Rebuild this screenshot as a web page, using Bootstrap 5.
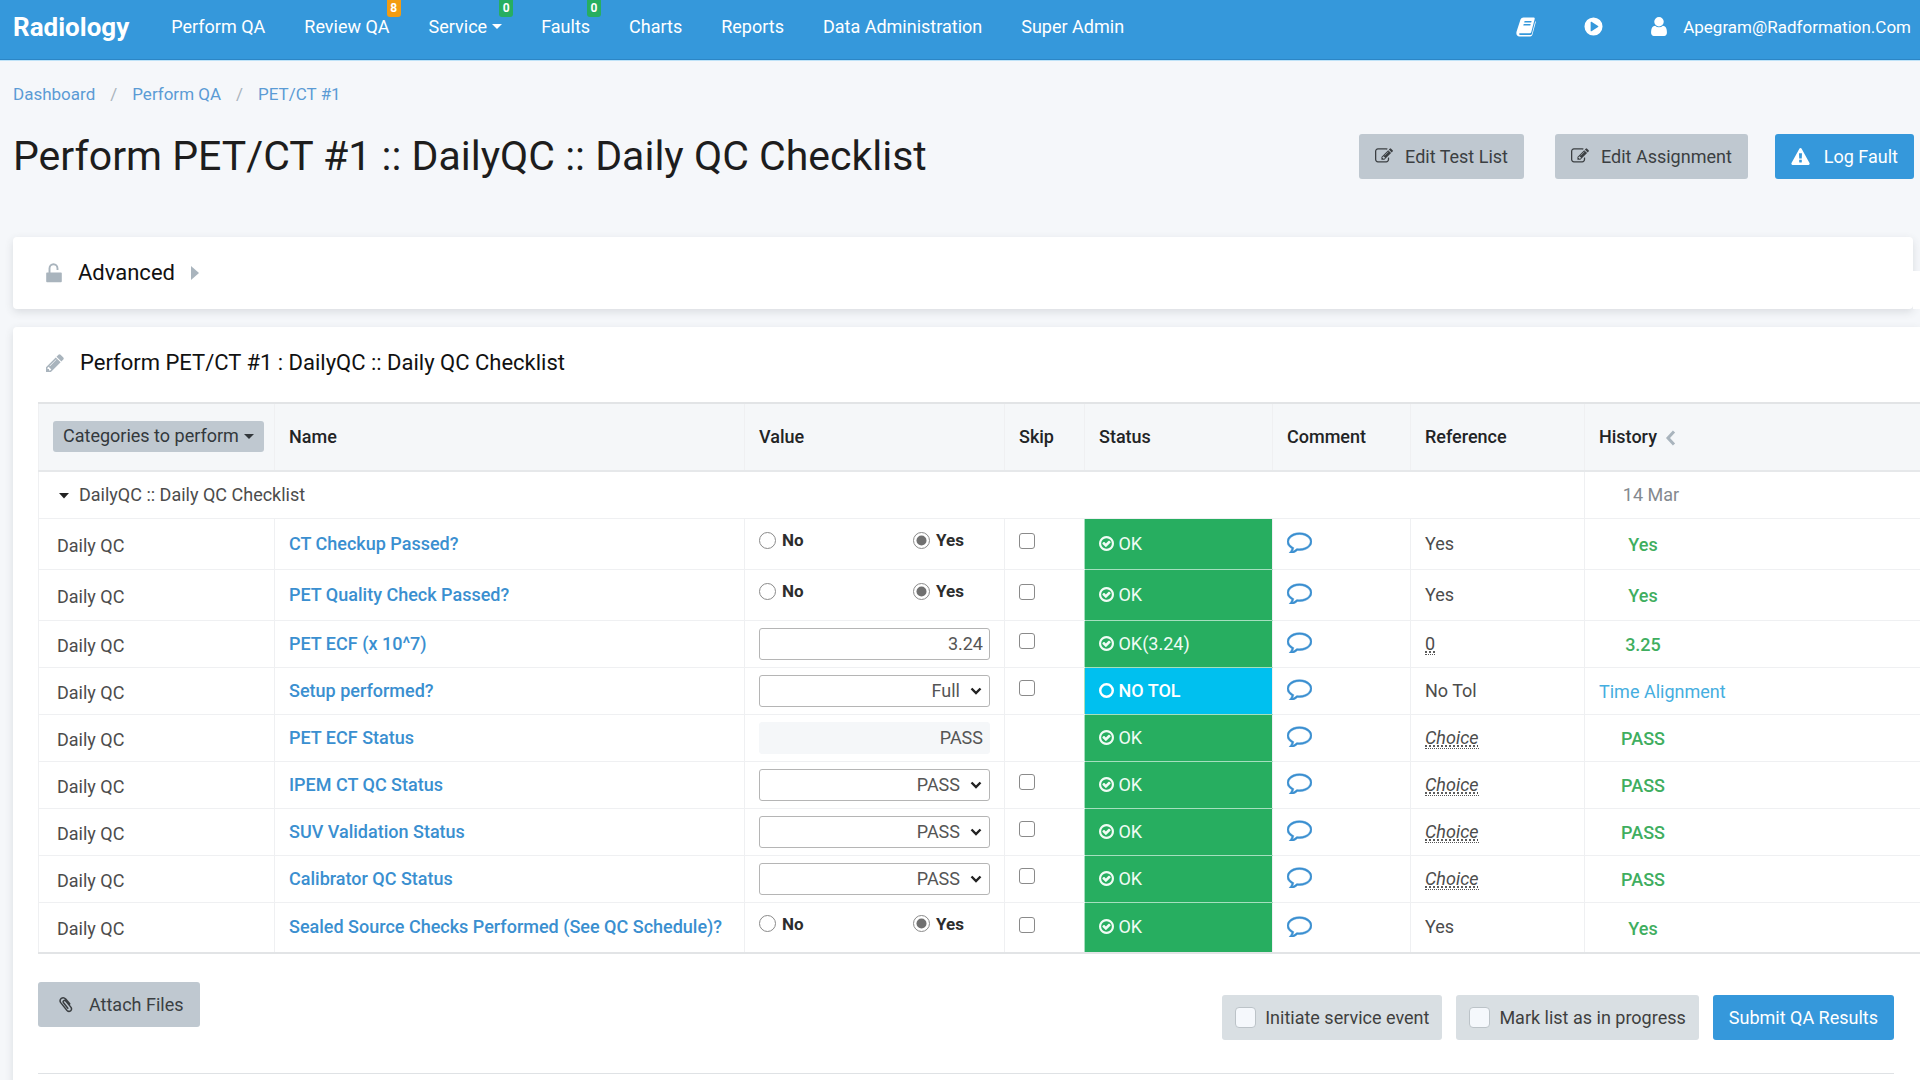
<!DOCTYPE html>
<html lang="en">
<head>
<meta charset="utf-8">
<meta name="viewport" content="width=device-width, initial-scale=1">
<title>Perform PET/CT #1 :: DailyQC :: Daily QC Checklist</title>
<link href="https://cdn.jsdelivr.net/npm/bootstrap@5.3.0/dist/css/bootstrap.min.css" rel="stylesheet">
<style>
  :root { --qa-blue: #3598db; --qa-green: #27ae60; --qa-grey: #bfc8d0; --qa-line: #eff0f2; }
  body { font-family: Roboto, "Liberation Sans", sans-serif; font-size: 18px; line-height: 24px; color: #4c4c4c; background: #f5f7fa; overflow-x: hidden; }
  a { text-decoration: none; }
  svg { fill: currentColor; flex: none; }
  .topbar { background: var(--qa-blue); border-bottom: 1px solid #2c86c6; box-shadow: 0 1px 0 #bfe3f8; height: 60px; padding: 0 9px 6px 13px; color: #fff; }
  .topbar a { color: #fff; }
  .brand { font-size: 26px; font-weight: 700; margin-right: 42px; }
  .main-nav { gap: 39px; }
  .main-nav .nav-link { padding: 0; height: 53px; display: flex; align-items: center; }
  .user-name { font-size: 17px; }
  .dropdown-toggle::after { border-width: 5px 5px 0; border-top-color: currentColor; margin-left: 5px; vertical-align: 3px; }
  .count { position: absolute; top: 0; right: -11px; min-width: 14px; height: 17px; padding: 0 3px; border-radius: 0 0 3px 3px; font-size: 12px; line-height: 16px; font-weight: 700; text-align: center; color: #fff; background: var(--qa-green); }
  .count-warn { background: #f39c12; }
  .page-head { padding: 22px 6px 0 13px; }
  .crumbs { --bs-breadcrumb-item-padding-x: 15px; --bs-breadcrumb-divider-color: #aab4bd; margin-bottom: 24px; font-size: 17px; }
  .crumbs a { color: #5b9bd5; }
  .page-title { font-size: 41px; line-height: 52px; font-weight: 400; color: #1d1d1d; margin: 0; }
  .tool { height: 45px; padding: 0 16px; border: 0; border-radius: 3px; font-size: 18px; display: inline-flex; align-items: center; gap: 12px; color: #3b3f42; background: var(--qa-grey); }
  .tool:hover { background: #b2bcc5; }
  .tool-blue { color: #fff; background: var(--qa-blue); gap: 14px; }
  .tool-blue:hover { color: #fff; background: #2c86c6; }
  .head-tools { gap: 27px; }
  .panel { background: #fff; border-radius: 4px; box-shadow: 0 3px 8px rgba(60, 64, 70, .14); }
  .panel-adv { position: relative; margin: 55px 7px 18px 13px; height: 72px; padding-left: 33px; }
  .panel-adv::after { content: ""; position: absolute; top: 34px; bottom: 0; right: -7px; width: 7px; background: #fff; }
  .panel-main { margin-left: 13px; padding: 21px 0 60px 25px; border-radius: 4px 0 0 0; }
  .panel-title { font-size: 22px; line-height: 30px; font-weight: 400; color: #111; margin: 0; }
  .panel svg.pale { color: #a9b4bd; }
  .qa-table { table-layout: fixed; width: 100%; margin: 24px 0 0; border-collapse: collapse; border: 1px solid #e2e4e6; border-width: 2px 0 2px 1px; }
  .qa-table th, .qa-table td { padding: 0 14px; border: 1px solid var(--qa-line); border-right: 0; vertical-align: middle; }
  .qa-table thead th { height: 68px; background: #f5f7f9; font-weight: 500; color: #222426; border-bottom: 2px solid #e6e8ea; }
  .qa-table thead th:first-child { padding-bottom: 2px; }
  .qa-table tbody tr { height: 47px; }
  .qa-table tbody tr.tall { height: 51px; }
  .qa-table td.cat { padding: 4px 18px 0; }
  .qa-table td.stat { color: #f0fbf4; background: var(--qa-green); border-color: #a5dfbe; }
  .qa-table td.notol { color: #fff; background: #00c0ef; font-weight: 500; }
  .group-caret { margin: 0 10px 0 6px; color: #222; }
  .stat svg { vertical-align: -1px; }
  .name a { color: #3a8fd0; font-weight: 500; }
  .cat-btn { height: 31px; padding: 0 10px; border: 0; border-radius: 3px; font-size: 18px; line-height: 24px; color: #33383c; background: var(--qa-grey); white-space: nowrap; }
  .value .form-control, .value .form-select { display: block; height: 32px; min-height: 32px; padding: 0 6px; border: 1px solid #b5b5b5; border-radius: 3px; font-size: 18px; line-height: 24px; color: #555; text-align: right; }
  .value .form-select { text-align-last: right; padding-right: 29px; background-position: right 7px center; background-size: 12px 12px; --bs-form-select-bg-img: url("data:image/svg+xml,%3Csvg xmlns='http://www.w3.org/2000/svg' viewBox='0 0 12 12'%3E%3Cpath fill='none' stroke='%23222' stroke-width='2.4' d='M1.5 3.5 6 8l4.5-4.5'/%3E%3C/svg%3E"); }
  .value .calc { border-color: #f5f7f9; background: #f5f7f9; }
  .choices { padding-bottom: 7px; }
  .choices label { color: #2d2d2d; font-size: 17px; font-weight: 700; display: flex; align-items: center; gap: 6px; }
  .choices label:first-child { width: 66.6667%; }
  .form-check-input { float: none; margin: 0; flex: none; }
  .choices .form-check-input { width: 17px; height: 17px; border: 1px solid #8a8a8a; background-color: #fff; }
  .choices .form-check-input:checked { border-color: #8a8a8a; background-size: 17px 17px; background-image: url("data:image/svg+xml,%3Csvg xmlns='http://www.w3.org/2000/svg' viewBox='0 0 17 17'%3E%3Ccircle cx='8.5' cy='8.5' r='5' fill='%23707070'/%3E%3C/svg%3E"); }
  .skip .form-check-input { display: block; width: 16px; height: 16px; border: 1px solid #8a8a8a; border-radius: 3px; margin-bottom: 5px; }
  .note-btn { display: block; padding: 0; border: 0; background: none; color: #3a8fd0; margin-bottom: 2px; }
  .note-btn svg { display: block; }
  .refv { text-decoration: underline dotted; text-underline-offset: 2px; border-bottom: 1px dotted #555; line-height: 20px; display: inline-block; cursor: help; }
  .hist span { display: inline-block; min-width: 88px; text-align: center; color: #3fae5f; font-weight: 500; padding-top: 3px; }
  .hist .info { color: #45aee0; font-weight: 400; }
  .hist .day { color: #84898e; min-width: 104px; font-weight: 400; padding: 0; }
  .opt { height: 45px; padding: 0 13px; border-radius: 3px; background: #d9dfe3; color: #3f3f3f; gap: 9px; }
  .opt .form-check-input { width: 21px; height: 21px; border: 1px solid #bcc3c8; border-radius: 4px; background-color: #f5f8fc; }
  .foot { padding-right: 26px; margin-top: 28px; }
  .foot-opts { gap: 14px; padding-top: 13px; }
  .rule { margin: 33px 26px 0 0; border-color: #dfe2e5; opacity: 1; }
</style>
<script src="https://cdn.jsdelivr.net/npm/bootstrap@5.3.0/dist/js/bootstrap.bundle.min.js"></script>
</head>
<body>
<svg class="d-none" aria-hidden="true">
  <symbol id="i-note" viewBox="0 236 1792 1448"><path stroke="currentColor" stroke-width="36" d="M896 384q-204 0-381.500 69.500t-282 187.500-104.500 255q0 112 71.500 213.500t201.500 175.500l87 50-27 96q-24 91-70 172 152-63 275-171l43-38 57 6q69 8 130 8 204 0 381.500-69.500t282-187.500 104.500-255-104.500-255-282-187.500-381.500-69.500zm896 512q0 174-120 321.500t-326 233-450 85.500q-70 0-145-8-198 175-460 242-49 14-114 22h-5q-15 0-27-10.500t-16-27.500v-1q-3-4-.5-12t2-10 4.500-9.500l6-9 7-8.500 8-9q7-8 31-34.500t34.500-38 31-39.500 32.500-51 27-59 26-76q-157-89-247.500-220t-90.500-281q0-174 120-321.500t326-233 450-85.500 450 85.500 326 233 120 321.500z"/></symbol>
  <symbol id="i-ok" viewBox="128 128 1536 1536"><path d="M1299 813l-422 422q-19 19-45 19t-45-19l-294-294q-19-19-19-45t19-45l102-102q19-19 45-19t45 19l147 147 275-275q19-19 45-19t45 19l102 102q19 19 19 45t-19 45zm141 83q0-148-73-273t-198-198-273-73-273 73-198 198-73 273 73 273 198 198 273 73 273-73 198-198 73-273zm224 0q0 209-103 385.500t-279.500 279.500-385.500 103-385.500-103-279.500-279.500-103-385.500 103-385.500 279.500-279.500 385.500-103 385.500 103 279.500 279.500 103 385.500z"/></symbol>
  <symbol id="i-ring" viewBox="0 0 16 16"><circle cx="8" cy="8" r="6.700" fill="none" stroke="currentColor" stroke-width="2.600"/></symbol>
  <symbol id="i-edit" viewBox="0 128 1792 1536"><path d="M888 1184l116-116-152-152-116 116v56h96v96h56zm440-720q-16-16-33 1l-350 350q-17 17-1 33t33-1l350-350q17-17 1-33zm80 594v190q0 119-84.500 203.500t-203.500 84.500h-832q-119 0-203.500-84.500t-84.500-203.500v-832q0-119 84.500-203.500t203.500-84.500h832q63 0 117 25 15 7 18 23 3 17-9 29l-49 49q-14 14-32 8-23-6-45-6h-832q-66 0-113 47t-47 113v832q0 66 47 113t113 47h832q66 0 113-47t47-113v-126q0-13 9-22l64-64q15-15 35-7t20 29zm-96-738l288 288-672 672h-288v-288zm444 132l-92 92-288-288 92-92q28-28 68-28t68 28l152 152q28 28 28 68t-28 68z"/></symbol>
  <symbol id="i-warn" viewBox="0 0 1792 1664"><path d="M1024 1375v-190q0-14-9.500-23.500t-22.500-9.500h-192q-13 0-22.500 9.500t-9.500 23.500v190q0 14 9.500 23.500t22.500 9.500h192q13 0 22.500-9.500t9.500-23.500zm-2-374l18-459q0-12-10-19-13-11-24-11h-220q-11 0-24 11-10 7-10 21l17 457q0 10 10 16.500t24 6.500h185q14 0 23.500-6.500t10.500-16.500zm-14-934l768 1408q35 63-2 126-17 29-46.500 46t-63.500 17h-1536q-34 0-63.500-17t-46.500-46q-37-63-2-126l768-1408q17-31 47-49t65-18 65 18 47 49z"/></symbol>
  <symbol id="i-user" viewBox="256 128 1280 1536"><path d="M1536 1399q0 109-62.500 187t-150.500 78h-854q-88 0-150.500-78t-62.500-187q0-85 8.500-160.500t31.500-152 58.500-131 94-89 134.500-34.500q131 128 313 128t313-128q76 0 134.500 34.500t94 89 58.500 131 31.500 152 8.500 160.500zm-256-887q0 159-112.500 271.500t-271.500 112.500-271.500-112.500-112.500-271.500 112.500-271.500 271.500-112.500 271.500 112.500 112.500 271.500z"/></symbol>
  <symbol id="i-pencil" viewBox="128 128 1536 1536"><path d="M491 1536l91-91-235-235-91 91v107h128v128h107zm523-928q0-22-22-22-10 0-17 7l-542 542q-7 7-7 17 0 22 22 22 10 0 17-7l542-542q7-7 7-17zm-54-192l416 416-832 832h-416v-416zm683 96q0 53-37 90l-166 166-416-416 166-165q36-38 90-38 53 0 91 38l235 234q37 39 37 91z"/></symbol>
  <symbol id="i-book" viewBox="0 0 20 20"><path fill-rule="evenodd" d="M7.500.5h10.200q1.300.2 1 1.500l-3.400 13q-.4 1.200-1.600 1.200H3.900q-1 .2-.8 1 .2.700 1.300.7h10.200q1 0 1.300-1L19.300 4q.6.5.4 1.500l-3.300 12.300q-.5 1.700-2.200 1.700H3.400Q.6 19.200.4 16.500.3 15.500.6 14.500L4.500 2.500Q5.300.5 7.500.5zM8.600 4l-.4 1.400h7L15.600 4zm-.9 3-.4 1.400h7l.4-1.400z"/></symbol>
  <symbol id="i-play" viewBox="0 0 20 20"><path fill-rule="evenodd" d="M10 .5a9.500 9.500 0 1 1 0 19 9.500 9.500 0 0 1 0-19zM7 5.600v8.800q0 1 .9.500l6.900-4.300q.8-.6 0-1.200L7.900 5.100Q7 4.600 7 5.600z"/></symbol>
  <symbol id="i-unlock" viewBox="0 0 16 20"><path d="M1 9.500h14q.8 0 .8.800v8q0 .9-.8.900H1q-.8 0-.8-.9v-8q0-.8.800-.8z"/><path d="M3.500 10V5.500a4 4.300 0 0 1 8 0V7" fill="none" stroke="currentColor" stroke-width="1.900"/></symbol>
  <symbol id="i-clip" viewBox="0 0 16 18"><path d="M12.500 8.300 8.200 3.100Q6 .8 3.500 2.400 1.200 4.400 2.900 7l6.700 8.300q1.800 1.800 3.800.5 1.800-1.600.5-3.800L8.300 5.200Q7.200 4.100 6 5q-1 1-.1 2.200l4.600 5.700" fill="none" stroke="currentColor" stroke-width="1.600" stroke-linecap="round"/></symbol>
</svg>

<header class="topbar d-flex align-items-center">
  <a class="brand" href="#">Radiology</a>
  <nav aria-label="Main">
    <ul class="nav main-nav">
      <li class="nav-item"><a class="nav-link" href="#">Perform QA</a></li>
      <li class="nav-item position-relative"><a class="nav-link" href="#">Review QA</a><span class="count count-warn">8</span></li>
      <li class="nav-item position-relative"><a class="nav-link dropdown-toggle" href="#">Service</a><span class="count">0</span></li>
      <li class="nav-item position-relative"><a class="nav-link" href="#">Faults</a><span class="count">0</span></li>
      <li class="nav-item"><a class="nav-link" href="#">Charts</a></li>
      <li class="nav-item"><a class="nav-link" href="#">Reports</a></li>
      <li class="nav-item"><a class="nav-link" href="#">Data Administration</a></li>
      <li class="nav-item"><a class="nav-link" href="#">Super Admin</a></li>
    </ul>
  </nav>
  <div class="d-flex align-items-center ms-auto">
    <a class="d-flex me-5" href="#" aria-label="Manual"><svg width="20" height="20"><use href="#i-book"/></svg></a>
    <a class="d-flex me-5" href="#" aria-label="Tutorials"><svg width="19" height="19"><use href="#i-play"/></svg></a>
    <a class="d-flex align-items-center" href="#"><svg class="me-3" width="16" height="19"><use href="#i-user"/></svg><span class="user-name">Apegram@Radformation.Com</span></a>
  </div>
</header>

<main>
  <div class="page-head">
    <nav aria-label="breadcrumb">
      <ol class="breadcrumb crumbs">
        <li class="breadcrumb-item"><a href="#">Dashboard</a></li>
        <li class="breadcrumb-item"><a href="#">Perform QA</a></li>
        <li class="breadcrumb-item"><a href="#">PET/CT #1</a></li>
      </ol>
    </nav>
    <div class="d-flex align-items-center justify-content-between">
      <h1 class="page-title">Perform PET/CT #1 :: DailyQC :: Daily QC Checklist</h1>
      <div class="d-flex head-tools">
        <button type="button" class="btn tool me-1"><svg width="18" height="16"><use href="#i-edit"/></svg>Edit Test List</button>
        <button type="button" class="btn tool"><svg width="18" height="16"><use href="#i-edit"/></svg>Edit Assignment</button>
        <button type="button" class="btn tool tool-blue"><svg width="19" height="17"><use href="#i-warn"/></svg>Log Fault</button>
      </div>
    </div>
  </div>

  <section class="panel panel-adv d-flex align-items-center">
    <svg class="pale" width="16" height="20"><use href="#i-unlock"/></svg>
    <h2 class="panel-title ms-3">Advanced</h2>
    <svg class="pale ms-3" width="8" height="14" viewBox="0 0 8 14"><path d="M0 0 8 7 0 14z"/></svg>
  </section>

  <section class="panel panel-main">
    <div class="d-flex align-items-center ps-2">
      <svg class="pale" width="18" height="18"><use href="#i-pencil"/></svg>
      <h2 class="panel-title ms-3">Perform PET/CT #1 : DailyQC :: Daily QC Checklist</h2>
    </div>

    <table class="qa-table">
      <colgroup><col style="width:236px"><col style="width:470px"><col style="width:260px"><col style="width:80px"><col style="width:188px"><col style="width:138px"><col style="width:174px"><col></colgroup>
      <thead>
        <tr>
          <th scope="col"><button type="button" class="cat-btn dropdown-toggle">Categories to perform</button></th>
          <th scope="col">Name</th><th scope="col">Value</th><th scope="col">Skip</th><th scope="col">Status</th><th scope="col">Comment</th><th scope="col">Reference</th>
          <th scope="col">History <svg class="pale ms-1" width="11" height="16" viewBox="0 0 11 16"><path d="M9 1.500 3 8l6 6.500" fill="none" stroke="currentColor" stroke-width="3"/></svg></th>
        </tr>
      </thead>
      <tbody>
        <tr>
          <td colspan="7"><svg class="group-caret" width="10" height="6" viewBox="0 0 10 6"><path d="M0 0h10L5 5.500z"/></svg>DailyQC :: Daily QC Checklist</td>
          <td class="hist"><span class="day">14 Mar</span></td>
        </tr>
        <tr class="tall">
          <td class="cat">Daily QC</td><td class="name"><a href="#">CT Checkup Passed?</a></td>
          <td class="value"><div class="choices d-flex"><label><input class="form-check-input" type="radio" name="ct">No</label><label><input class="form-check-input" type="radio" name="ct" checked>Yes</label></div></td>
          <td class="skip"><input class="form-check-input" type="checkbox" aria-label="Skip CT Checkup"></td>
          <td class="stat"><svg width="15" height="15"><use href="#i-ok"/></svg> OK</td>
          <td><button class="note-btn" type="button" aria-label="Comment"><svg width="25" height="21"><use href="#i-note"/></svg></button></td>
          <td>Yes</td><td class="hist"><span>Yes</span></td>
        </tr>
        <tr class="tall">
          <td class="cat">Daily QC</td><td class="name"><a href="#">PET Quality Check Passed?</a></td>
          <td class="value"><div class="choices d-flex"><label><input class="form-check-input" type="radio" name="pq">No</label><label><input class="form-check-input" type="radio" name="pq" checked>Yes</label></div></td>
          <td class="skip"><input class="form-check-input" type="checkbox" aria-label="Skip PET Quality Check"></td>
          <td class="stat"><svg width="15" height="15"><use href="#i-ok"/></svg> OK</td>
          <td><button class="note-btn" type="button" aria-label="Comment"><svg width="25" height="21"><use href="#i-note"/></svg></button></td>
          <td>Yes</td><td class="hist"><span>Yes</span></td>
        </tr>
        <tr>
          <td class="cat">Daily QC</td><td class="name"><a href="#">PET ECF (x 10^7)</a></td>
          <td class="value"><input class="form-control" type="text" value="3.24" aria-label="PET ECF"></td>
          <td class="skip"><input class="form-check-input" type="checkbox" aria-label="Skip PET ECF"></td>
          <td class="stat"><svg width="15" height="15"><use href="#i-ok"/></svg> OK(3.24)</td>
          <td><button class="note-btn" type="button" aria-label="Comment"><svg width="25" height="21"><use href="#i-note"/></svg></button></td>
          <td><span class="refv">0</span></td><td class="hist"><span>3.25</span></td>
        </tr>
        <tr>
          <td class="cat">Daily QC</td><td class="name"><a href="#">Setup performed?</a></td>
          <td class="value"><select class="form-select" aria-label="Setup performed"><option>Full</option></select></td>
          <td class="skip"><input class="form-check-input" type="checkbox" aria-label="Skip Setup performed"></td>
          <td class="stat notol"><svg width="15" height="15"><use href="#i-ring"/></svg> NO TOL</td>
          <td><button class="note-btn" type="button" aria-label="Comment"><svg width="25" height="21"><use href="#i-note"/></svg></button></td>
          <td>No Tol</td><td class="hist"><span class="info">Time Alignment</span></td>
        </tr>
        <tr>
          <td class="cat">Daily QC</td><td class="name"><a href="#">PET ECF Status</a></td>
          <td class="value"><input class="form-control calc" type="text" value="PASS" readonly aria-label="PET ECF Status"></td>
          <td class="skip"></td>
          <td class="stat"><svg width="15" height="15"><use href="#i-ok"/></svg> OK</td>
          <td><button class="note-btn" type="button" aria-label="Comment"><svg width="25" height="21"><use href="#i-note"/></svg></button></td>
          <td><em class="refv">Choice</em></td><td class="hist"><span>PASS</span></td>
        </tr>
        <tr>
          <td class="cat">Daily QC</td><td class="name"><a href="#">IPEM CT QC Status</a></td>
          <td class="value"><select class="form-select" aria-label="IPEM CT QC Status"><option>PASS</option></select></td>
          <td class="skip"><input class="form-check-input" type="checkbox" aria-label="Skip IPEM CT QC Status"></td>
          <td class="stat"><svg width="15" height="15"><use href="#i-ok"/></svg> OK</td>
          <td><button class="note-btn" type="button" aria-label="Comment"><svg width="25" height="21"><use href="#i-note"/></svg></button></td>
          <td><em class="refv">Choice</em></td><td class="hist"><span>PASS</span></td>
        </tr>
        <tr>
          <td class="cat">Daily QC</td><td class="name"><a href="#">SUV Validation Status</a></td>
          <td class="value"><select class="form-select" aria-label="SUV Validation Status"><option>PASS</option></select></td>
          <td class="skip"><input class="form-check-input" type="checkbox" aria-label="Skip SUV Validation Status"></td>
          <td class="stat"><svg width="15" height="15"><use href="#i-ok"/></svg> OK</td>
          <td><button class="note-btn" type="button" aria-label="Comment"><svg width="25" height="21"><use href="#i-note"/></svg></button></td>
          <td><em class="refv">Choice</em></td><td class="hist"><span>PASS</span></td>
        </tr>
        <tr>
          <td class="cat">Daily QC</td><td class="name"><a href="#">Calibrator QC Status</a></td>
          <td class="value"><select class="form-select" aria-label="Calibrator QC Status"><option>PASS</option></select></td>
          <td class="skip"><input class="form-check-input" type="checkbox" aria-label="Skip Calibrator QC Status"></td>
          <td class="stat"><svg width="15" height="15"><use href="#i-ok"/></svg> OK</td>
          <td><button class="note-btn" type="button" aria-label="Comment"><svg width="25" height="21"><use href="#i-note"/></svg></button></td>
          <td><em class="refv">Choice</em></td><td class="hist"><span>PASS</span></td>
        </tr>
        <tr class="tall">
          <td class="cat">Daily QC</td><td class="name"><a href="#">Sealed Source Checks Performed (See QC Schedule)?</a></td>
          <td class="value"><div class="choices d-flex"><label><input class="form-check-input" type="radio" name="ss">No</label><label><input class="form-check-input" type="radio" name="ss" checked>Yes</label></div></td>
          <td class="skip"><input class="form-check-input" type="checkbox" aria-label="Skip Sealed Source Checks"></td>
          <td class="stat"><svg width="15" height="15"><use href="#i-ok"/></svg> OK</td>
          <td><button class="note-btn" type="button" aria-label="Comment"><svg width="25" height="21"><use href="#i-note"/></svg></button></td>
          <td>Yes</td><td class="hist"><span>Yes</span></td>
        </tr>
      </tbody>
    </table>

    <div class="foot d-flex justify-content-between align-items-start">
      <button type="button" class="btn tool"><svg class="mx-1" width="15" height="17"><use href="#i-clip"/></svg>Attach Files</button>
      <div class="foot-opts d-flex">
        <label class="opt d-flex align-items-center"><input class="form-check-input" type="checkbox">Initiate service event</label>
        <label class="opt d-flex align-items-center"><input class="form-check-input" type="checkbox">Mark list as in progress</label>
        <button type="submit" class="btn tool tool-blue">Submit QA Results</button>
      </div>
    </div>
    <hr class="rule">
  </section>
</main>
</body>
</html>
